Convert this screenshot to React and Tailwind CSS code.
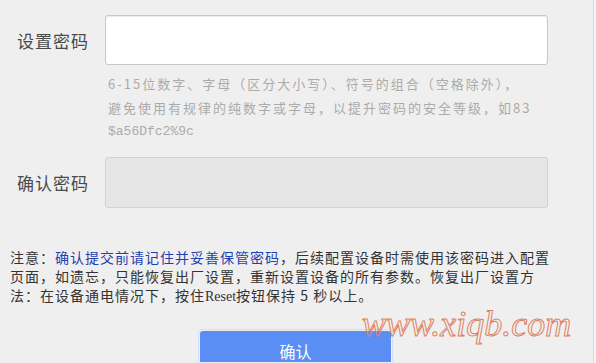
import React from 'react';

const cjk = { fontFamily: '"Noto Sans CJK SC", "Noto Sans", sans-serif' };

function App() {
  return (
    <div className="relative w-[596px] h-[363px] overflow-hidden bg-[#f4f4f4]" style={cjk}>
      <div className="w-[594px] h-full bg-[#efefef] border-r border-[#dadada]">
        {/* set password */}
        <div className="flex items-center pt-[15px]">
          <div className="w-[105px] pl-[17px] text-[17px] tracking-[1px] text-[#4a4a4a] leading-none">设置密码</div>
          <div className="w-[443px] h-[50px] bg-white border border-[#c9c9c9] rounded-[3px] shadow-[inset_0_1px_1px_rgba(0,0,0,0.08)]"></div>
        </div>
        <div className="ml-[108px] mt-[7px] text-[13px] tracking-[2px] leading-[24px] text-[#ababab]">
          <div>6-15位数字、字母（区分大小写）、符号的组合（空格除外），</div>
          <div>避免使用有规律的纯数字或字母，以提升密码的安全等级，如83</div>
          <div className="tracking-normal" style={{ fontFamily: '"Liberation Mono", monospace' }}>$a56Dfc2%9c</div>
        </div>

        {/* confirm password */}
        <div className="flex items-center mt-[13px]">
          <div className="w-[105px] pl-[17px] text-[17px] tracking-[1px] text-[#4a4a4a] leading-none">确认密码</div>
          <div className="w-[443px] h-[51px] bg-[#e6e6e6] border border-[#d2d2d2] rounded-[3px]"></div>
        </div>

        {/* note */}
        <div className="ml-[10px] mt-[40px] text-[14px] tracking-[1px] leading-[19px] text-[#333]">
          <div>注意：<span className="text-[#1f3fae]">确认提交前请记住并妥善保管密码</span>，后续配置设备时需使用该密码进入配置</div>
          <div>页面，如遗忘，只能恢复出厂设置，重新设置设备的所有参数。恢复出厂设置方</div>
          <div>法：在设备通电情况下，按住<span className="tracking-normal" style={{ fontFamily: '"Liberation Serif", serif' }}>Reset</span>按钮保持 5 秒以上。</div>
        </div>

        <div className="mt-[23px] ml-[198px] w-[195px] rounded-t-[4px] border border-b-0 border-[#cfe0fb] p-px pb-0">
          <button className="w-full h-[31px] flex items-end justify-center pb-[2px] bg-[#5a8ef4] rounded-t-[3px] text-white text-[16px] leading-[18px]">确认</button>
        </div>
      </div>

      {/* watermark */}
      <div
        className="absolute left-[362px] top-[306px] text-[36px] italic text-transparent leading-none"
        style={{ fontFamily: '"Liberation Serif", serif', WebkitTextStroke: '1px #e0805f' }}
      >
        www.xiqb.com
      </div>
    </div>
  );
}

export default App;
